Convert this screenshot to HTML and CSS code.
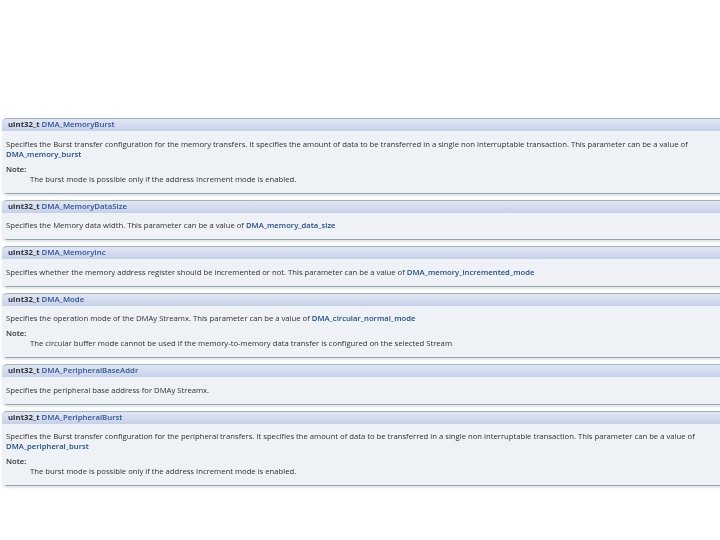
FILE: index.html
```html
<!DOCTYPE html>
<html lang="en">
<head>
<meta charset="utf-8">
<title>DMA_InitTypeDef fields</title>
<link rel="stylesheet" href="styles.css">
</head>
<body>
<main class="list">
  <section class="item">
    <h3 class="head"><span class="type">uint32_t</span> <a class="name">DMA_MemoryBurst</a></h3>
    <div class="body">
      <p class="text">Specifies the Burst transfer configuration for the memory transfers. It specifies the amount of data to be transferred in a single non interruptable transaction. This parameter can be a value of <a class="link">DMA_memory_burst</a></p>
      <p class="note-label">Note:</p>
      <p class="note">The burst mode is possible only if the address Increment mode is enabled.</p>
    </div>
  </section>
  <section class="item">
    <h3 class="head"><span class="type">uint32_t</span> <a class="name">DMA_MemoryDataSize</a></h3>
    <div class="body">
      <p class="text">Specifies the Memory data width. This parameter can be a value of <a class="link">DMA_memory_data_size</a></p>
    </div>
  </section>
  <section class="item">
    <h3 class="head"><span class="type">uint32_t</span> <a class="name">DMA_MemoryInc</a></h3>
    <div class="body">
      <p class="text">Specifies whether the memory address register should be incremented or not. This parameter can be a value of <a class="link">DMA_memory_incremented_mode</a></p>
    </div>
  </section>
  <section class="item">
    <h3 class="head"><span class="type">uint32_t</span> <a class="name">DMA_Mode</a></h3>
    <div class="body">
      <p class="text">Specifies the operation mode of the DMAy Streamx. This parameter can be a value of <a class="link">DMA_circular_normal_mode</a></p>
      <p class="note-label">Note:</p>
      <p class="note">The circular buffer mode cannot be used if the memory-to-memory data transfer is configured on the selected Stream</p>
    </div>
  </section>
  <section class="item">
    <h3 class="head"><span class="type">uint32_t</span> <a class="name">DMA_PeripheralBaseAddr</a></h3>
    <div class="body">
      <p class="text">Specifies the peripheral base address for DMAy Streamx.</p>
    </div>
  </section>
  <section class="item">
    <h3 class="head"><span class="type">uint32_t</span> <a class="name">DMA_PeripheralBurst</a></h3>
    <div class="body">
      <p class="text">Specifies the Burst transfer configuration for the peripheral transfers. It specifies the amount of data to be transferred in a single non interruptable transaction. This parameter can be a value of <a class="link">DMA_peripheral_burst</a></p>
      <p class="note-label">Note:</p>
      <p class="note">The burst mode is possible only if the address Increment mode is enabled.</p>
    </div>
  </section>
</main>
</body>
</html>
```

FILE: styles.css
```css
html, body {
  margin: 0;
  padding: 0;
  background: #fff;
}
body {
  width: 720px;
  height: 540px;
  overflow: hidden;
}
.list {
  display: flex;
  flex-direction: column;
  gap: 6px;
  padding: 118px 0 0 2px;
  font-family: "Open Sans", sans-serif;
  font-size: 7.7px;
  line-height: 10px;
  color: #303030;
  filter: blur(0.35px);
}
.item {
  width: 730px;
  border-bottom: 1px solid #8fa8ad;
  border-radius: 0 0 0 5px;
  box-shadow: 0 2px 2px #e2e6e9;
}
.head {
  margin: 0;
  height: 13px;
  box-sizing: border-box;
  padding: 0 0 0 6px;
  font-size: 7.8px;
  line-height: 10px;
  font-weight: 700;
  color: #333;
  border-top: 1px solid #9db4bb;
  border-radius: 5px 0 0 0;
  background: linear-gradient(#e2e6f3, #c5d1ea);
}
.name {
  color: #2f5596;
  font-weight: 600;
}
.body {
  background: #eef1f5;
  padding: 7.5px 0 9px 4px;
}
.text {
  margin: 0;
  width: 692px;
}
.link {
  color: #1c4c8c;
  font-weight: 600;
}
.note-label {
  margin: 5px 0 0;
  font-weight: 600;
}
.note {
  margin: 0;
  padding-left: 24px;
}
```
